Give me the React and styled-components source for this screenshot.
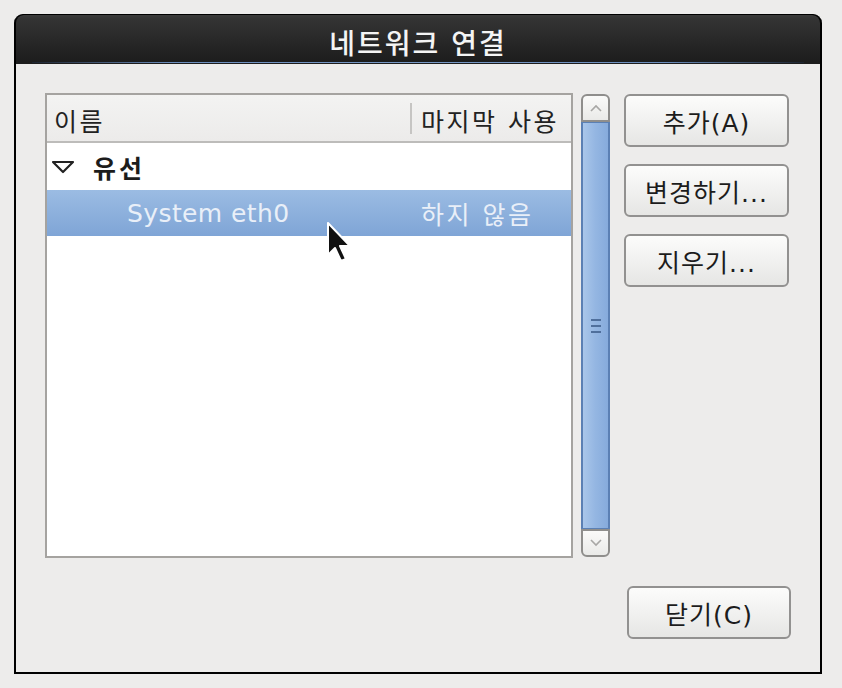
import React from "react";
import styled, { createGlobalStyle } from "styled-components";

const GlobalStyle = createGlobalStyle`
  html, body { margin: 0; padding: 0; background: #edeceb; }
  body { font-family: "DejaVu Sans", "Noto Sans CJK KR", sans-serif; font-size: 25px; color: #1c1c1c; }
  * { box-sizing: border-box; }
`;

const Page = styled.div`
  padding: 14px 0 0 14px;
  width: 842px;
  height: 688px;
`;

const Window = styled.div`
  width: 808px;
  display: flex;
  flex-direction: column;
  border-radius: 9px 9px 0 0;
  overflow: hidden;
  background: #000;
  padding: 0 2px 2px 2px;
  border-top: 1px solid #000;
`;

const TitleBar = styled.div`
  height: 49px;
  display: flex;
  flex-direction: column;
  background: linear-gradient(#3b3b3b 0px, #333 4px, #2b2b2b 20px, #1d1d1d 46px);
  border-radius: 8px 8px 0 0;
`;

const Title = styled.div`
  flex: 1;
  display: flex;
  align-items: center;
  justify-content: center;
  padding-top: 7px;
  color: #f4f4f4;
  font-size: 28px;
  font-weight: 500;
  letter-spacing: 2px;
`;

const Glow = styled.div`
  height: 2px;
  margin: 0 16px 1px 16px;
  background: linear-gradient(90deg, #1d2430 0%, #6a8cbc 18%, #7798c6 50%, #6a8cbc 82%, #1d2430 100%);
`;

const Body = styled.div`
  background: #edeceb;
  padding: 29px 29px 33px 29px;
  display: flex;
  flex-direction: column;
`;

const Main = styled.div`
  height: 465px;
  display: flex;
  align-items: flex-start;
`;

const ListBox = styled.div`
  position: relative;
  width: 528px;
  height: 465px;
  border: 2px solid #a5a3a0;
  background: #fff;
  display: flex;
  flex-direction: column;
`;

const Header = styled.div`
  height: 48px;
  display: grid;
  grid-template-columns: 363px 1fr;
  background: linear-gradient(#f3f3f2, #ecebea);
  border-bottom: 2px solid #bdbcba;
`;

const HeaderCell = styled.div`
  display: flex;
  align-items: center;
  padding: 4px 0 0 ${(p) => p.$pad}px;
  color: #222;
  letter-spacing: 2.5px;
`;

const Separator = styled.div`
  width: 2px;
  height: 31px;
  background: #c6c5c3;
  margin-right: 9px;
  margin-top: -4px;
`;

const Row = styled.div`
  height: ${(p) => p.$h}px;
  display: grid;
  grid-template-columns: 363px 1fr;
  align-items: center;
  ${(p) =>
    p.$selected &&
    `background: linear-gradient(#9bbce3, #7fa5d6); color: #e9eff8;`}
`;

const Cell = styled.div`
  display: flex;
  align-items: center;
  padding-left: ${(p) => p.$pad}px;
  font-weight: ${(p) => (p.$bold ? 700 : 400)};
  letter-spacing: ${(p) => p.$ls ?? 0.4}px;
`;

const Expander = styled.svg`
  width: 24px;
  height: 14px;
  margin-right: 18px;
`;

const Cursor = styled.svg`
  position: absolute;
  left: 279px;
  top: 127px;
  width: 26px;
  height: 42px;
`;

const Scrollbar = styled.div`
  margin-left: 8px;
  margin-top: 1px;
  width: 29px;
  height: 463px;
  display: flex;
  flex-direction: column;
`;

const StepButton = styled.div`
  height: 28px;
  background: linear-gradient(#fafaf9, #eaeae8);
  border: 2px solid #8f8e8c;
  border-radius: ${(p) => (p.$top ? "6px 6px 0 0" : "0 0 6px 6px")};
  display: flex;
  align-items: center;
  justify-content: center;
`;

const Thumb = styled.div`
  flex: 1;
  border: 2px solid #5b80b4;
  border-top-width: 1px;
  border-bottom-width: 1px;
  background: linear-gradient(90deg, #a9c6ea, #94b6e2 50%, #86abdc);
  display: flex;
  flex-direction: column;
  align-items: center;
  justify-content: center;
  gap: 4px;
`;

const Grip = styled.div`
  width: 10px;
  height: 2px;
  background: #4f6f9c;
`;

const ButtonCol = styled.div`
  margin-left: 14px;
  margin-top: 1px;
  width: 165px;
  display: flex;
  flex-direction: column;
  gap: 17px;
`;

const Button = styled.button`
  width: ${(p) => p.$w || 165}px;
  height: 53px;
  border: 2px solid #929190;
  border-radius: 6px;
  background: linear-gradient(#fcfcfb, #f1f1f0 50%, #e6e6e4);
  font-family: inherit;
  font-size: 25px;
  color: #1c1c1c;
  display: flex;
  align-items: center;
  justify-content: center;
  padding: 0;
  letter-spacing: 1px;
`;

const Footer = styled.div`
  margin-top: 28px;
  display: flex;
  justify-content: flex-end;
`;

export default function App() {
  return (
    <>
      <GlobalStyle />
      <Page>
        <Window>
          <TitleBar>
            <Title>네트워크 연결</Title>
            <Glow />
          </TitleBar>
          <Body>
            <Main>
              <ListBox>
                <Header>
                  <HeaderCell $pad={7}>이름</HeaderCell>
                  <HeaderCell $pad={0}>
                    <Separator />
                    마지막 사용
                  </HeaderCell>
                </Header>
                <Row $h={47}>
                  <Cell $pad={4} $bold $ls={3}>
                    <Expander viewBox="0 0 24 14">
                      <path d="M2 2 L22 2 L12 12 Z" fill="#fff" stroke="#222" strokeWidth="2.2" strokeLinejoin="round" />
                    </Expander>
                    유선
                  </Cell>
                  <Cell />
                </Row>
                <Row $h={46} $selected>
                  <Cell $pad={80}>System eth0</Cell>
                  <Cell $pad={11} $ls={2.5}>하지 않음</Cell>
                </Row>
                <Cursor viewBox="0 0 26 42">
                  <path
                    d="M2 1 L2 33 L9 26 L15 39 L20 37 L14 24 L24 24 Z"
                    fill="#111"
                    stroke="#fff"
                    strokeWidth="2"
                    strokeLinejoin="round"
                  />
                </Cursor>
              </ListBox>
              <Scrollbar>
                <StepButton $top>
                  <svg width="12" height="8" viewBox="0 0 12 8">
                    <path d="M1 7 L6 2 L11 7" fill="none" stroke="#a8a7a5" strokeWidth="1.6" />
                  </svg>
                </StepButton>
                <Thumb>
                  <Grip />
                  <Grip />
                  <Grip />
                </Thumb>
                <StepButton>
                  <svg width="12" height="8" viewBox="0 0 12 8">
                    <path d="M1 1 L6 6 L11 1" fill="none" stroke="#a8a7a5" strokeWidth="1.6" />
                  </svg>
                </StepButton>
              </Scrollbar>
              <ButtonCol>
                <Button>추가(A)</Button>
                <Button>변경하기...</Button>
                <Button>지우기...</Button>
              </ButtonCol>
            </Main>
            <Footer>
              <Button $w={164}>닫기(C)</Button>
            </Footer>
          </Body>
        </Window>
      </Page>
    </>
  );
}
